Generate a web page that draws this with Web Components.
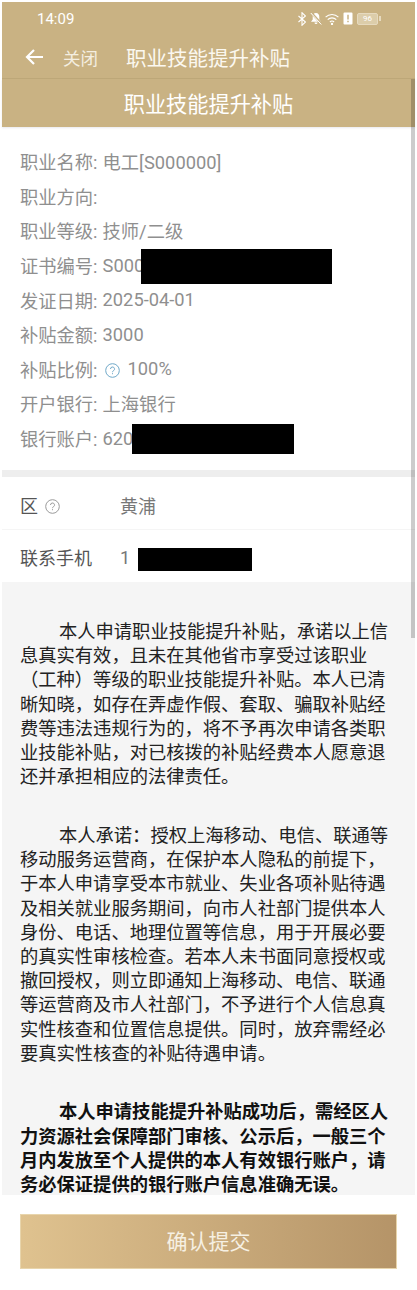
<!DOCTYPE html>
<html lang="zh">
<head>
<meta charset="utf-8">
<style>
  html, body { margin: 0; padding: 0; background: #fff; }
  body { width: 417px; height: 1290px; overflow: hidden; font-family: "Noto Sans CJK SC", "Liberation Sans", sans-serif; }
</style>
</head>
<body>
<app-page></app-page>
<script>
const CJK = '"Roboto", "Noto Sans CJK SC", sans-serif';

class StatusBar extends HTMLElement {
  constructor() {
    super();
    this.attachShadow({ mode: "open" }).innerHTML = `
      <style>
        :host { display: flex; align-items: center; justify-content: space-between; box-sizing: border-box; height: 34px; padding: 0 34px 1px 35px; color: #fff; font: 15px ${CJK}; }
        .icons { display: flex; align-items: center; }
        svg { display: block; }
        .batt { display: flex; align-items: center; gap: 1px; margin-left: 4px; }
        .level { box-sizing: border-box; width: 21px; height: 12px; border: 1px solid #e6dabf; border-radius: 2px; background: #dccdaa; font-size: 8px; line-height: 10px; text-align: center; color: #fff; }
        .tip { width: 2px; height: 5px; background: #e6dabf; }
      </style>
      <span>14:09</span>
      <div class="icons">
        <svg width="8" height="14" viewBox="0 0 8 14" fill="none" stroke="#fff" stroke-width="1.100"><path d="M.5 4l7 6-3.500 3.300V.7L7.500 4l-7 6"/></svg>
        <svg width="12" height="13" viewBox="0 0 12 13" fill="#fff" style="margin-left:4px"><path d="M6 1c2.300 0 3.300 1.800 3.300 3.800v2.800l1.700 2.200H1l1.700-2.200V4.800C2.700 2.800 3.700 1 6 1z"/><path d="M4.500 10.600h3a1.500 1.500 0 0 1-3 0z"/><path d="M1 .5l10.500 11.500" stroke="#c9b283" stroke-width="2.400"/><path d="M.8 1l10.500 11.500" stroke="#fff" stroke-width="1"/></svg>
        <svg width="14" height="12" viewBox="0 0 14 12" fill="none" stroke="#fff" stroke-width="1.100" style="margin-left:3px"><path d="M.6 4.200a9 9 0 0 1 12.800 0M2.700 6.700a6 6 0 0 1 8.600 0M4.900 9a3 3 0 0 1 4.200 0"/><circle cx="7" cy="11" r=".6" fill="#fff"/></svg>
        <svg width="10" height="13" viewBox="0 0 10 13" style="margin-left:4px"><path fill="#fff" d="M1.500 .5h7a1 1 0 0 1 1 1v10a1 1 0 0 1-1 1h-7a1 1 0 0 1-1-1v-10a1 1 0 0 1 1-1z"/><path d="M5 2.700v4.800M5 8.800v1.500" stroke="#c9b283" stroke-width="1.500"/></svg>
        <div class="batt"><div class="level">96</div><div class="tip"></div></div>
      </div>`;
  }
}

class NavBar extends HTMLElement {
  constructor() {
    super();
    this.attachShadow({ mode: "open" }).innerHTML = `
      <style>
        :host { display: flex; align-items: center; box-sizing: border-box; height: 43px; padding-left: 23px; color: #fff; font-family: "Noto Sans CJK SC", sans-serif; border-bottom: 1px solid #bfa878; }
        svg { display: block; margin-right: 20px; }
        .close { font-size: 17.500px; width: 63px; color: #f4eee0; }
        .title { font-size: 20.500px; color: #fbf8f0; }
      </style>
      <svg width="18" height="16" viewBox="0 0 18 16" fill="none" stroke="#fff" stroke-width="2.200"><path d="M18 8H2M9 1L2 8l7 7"/></svg>
      <span class="close">关闭</span>
      <span class="title"><slot></slot></span>`;
  }
}

class PageHeading extends HTMLElement {
  constructor() {
    super();
    this.attachShadow({ mode: "open" }).innerHTML = `
      <style>
        :host { display: block; box-sizing: border-box; height: 48px; padding-top: 2px; text-align: center; color: #fff; background: #c9b283; font: 21.200px/44px "Noto Sans CJK SC", sans-serif; box-shadow: 0 1px 2px rgba(120,130,160,.18); position: relative; }
      </style>
      <slot></slot>`;
  }
}

class InfoRow extends HTMLElement {
  constructor() {
    super();
    this.attachShadow({ mode: "open" }).innerHTML = `
      <style>
        :host { display: flex; align-items: center; height: 34.600px; color: #8f8f8f; font: 18.300px ${CJK}; white-space: nowrap; }
        .label { margin-right: 5px; }
      </style>
      <span class="label">${this.getAttribute("label")}:</span>
      <slot></slot>`;
  }
}

class FormRow extends HTMLElement {
  constructor() {
    super();
    this.attachShadow({ mode: "open" }).innerHTML = `
      <style>
        :host { display: flex; align-items: center; box-sizing: border-box; padding-left: 18px; font: 18px ${CJK}; color: #555; white-space: nowrap; }
        .label { width: 100px; display: flex; align-items: center; gap: 7px; }
        .value { display: flex; align-items: center; color: #777; }
      </style>
      <div class="label">${this.getAttribute("label")}<slot name="tip"></slot></div>
      <div class="value"><slot></slot></div>`;
  }
}

class HelpIcon extends HTMLElement {
  constructor() {
    super();
    const c = this.getAttribute("color") || "#9a9a9a";
    this.attachShadow({ mode: "open" }).innerHTML = `
      <style>
        :host { display: inline-flex; }
        svg { display: block; }
      </style>
      <svg width="15" height="15" viewBox="0 0 15 15" fill="none" stroke="${c}" stroke-width="1"><circle cx="7.500" cy="7.500" r="6.800"/><path d="M5.500 6a2 2 0 1 1 3 1.700c-.7.400-1 .8-1 1.500"/><path d="M7.500 10.200v1"/></svg>`;
  }
}

class ScrollThumb extends HTMLElement {
  constructor() {
    super();
    this.attachShadow({ mode: "open" }).innerHTML = `
      <style>
        :host { position: absolute; top: 79px; right: 2px; width: 4px; height: 559px; background: rgba(0,0,0,.2); }
      </style>`;
  }
}

class NoticeText extends HTMLElement {
  constructor() {
    super();
    this.attachShadow({ mode: "open" }).innerHTML = `
      <style>
        :host { display: block; height: 613px; overflow: hidden; background: #f5f5f5; padding: 36px 26px 0 18px; box-sizing: border-box; color: #222; font: 18.300px/24.200px "Noto Sans CJK SC", sans-serif; }
        ::slotted(p) { margin: 0 0 34.500px; text-indent: 39px; }
        ::slotted(p.strong) { font-weight: 700; color: #111; margin-bottom: 0; }
      </style>
      <slot></slot>`;
  }
}

class SubmitButton extends HTMLElement {
  constructor() {
    super();
    this.attachShadow({ mode: "open" }).innerHTML = `
      <style>
        :host { display: block; }
        button { display: block; box-sizing: border-box; width: 377px; height: 55px; padding: 0 0 4px; border: 1px solid #e8d5ac; background: linear-gradient(90deg, #dfc28f, #b59468); color: #f6f0e3; font: 21px "Noto Sans CJK SC", sans-serif; }
      </style>
      <button><slot></slot></button>`;
  }
}

class AppPage extends HTMLElement {
  constructor() {
    super();
    this.attachShadow({ mode: "open" }).innerHTML = `
      <style>
        :host { display: block; position: relative; width: 417px; height: 1290px; padding: 2px 2px 0 2px; box-sizing: border-box; background: #fff; }
        .top { background: #c9b283; }
        .info { padding: 17px 0 0 18px; height: 343px; box-sizing: border-box; }
        .mask { display: inline-block; flex: none; background: #000; }
        .band { height: 7px; background: #eeeeee; }
        .rows { display: flex; flex-direction: column; }
        .r1 { height: 53px; padding-top: 3px; border-bottom: 1px solid #f5f5f5; }
        .r2 { height: 52px; padding-top: 2px; }
        .foot { padding: 19px 0 0 18px; }
        .pct { margin-left: 8px; }
        .tipped { margin: 4px 0 0 2px; }
        .r1 help-icon { margin-top: 3px; }
      </style>
      <div class="top">
        <status-bar></status-bar>
        <nav-bar>职业技能提升补贴</nav-bar>
        <page-heading>职业技能提升补贴</page-heading>
      </div>
      <div class="info">
        <info-row label="职业名称">电工[S000000]</info-row>
        <info-row label="职业方向"></info-row>
        <info-row label="职业等级">技师/二级</info-row>
        <info-row label="证书编号">S000<span class="mask" style="width:191px;height:35px;margin:2px 0 0 -3px"></span></info-row>
        <info-row label="发证日期">2025-04-01</info-row>
        <info-row label="补贴金额">3000</info-row>
        <info-row label="补贴比例"><help-icon class="tipped" color="#6fa8c8"></help-icon><span class="pct">100%</span></info-row>
        <info-row label="开户银行">上海银行</info-row>
        <info-row label="银行账户">620<span class="mask" style="width:162px;height:30px;margin:2px 0 0 -1px"></span></info-row>
      </div>
      <div class="band"></div>
      <div class="rows">
        <form-row class="r1" label="区"><help-icon slot="tip"></help-icon>黄浦</form-row>
        <form-row class="r2" label="联系手机">1<span class="mask" style="width:114px;height:23px;margin:4px 0 0 8px"></span></form-row>
      </div>
      <notice-text>
        <p>本人申请职业技能提升补贴，承诺以上信息真实有效，且未在其他省市享受过该职业（工种）等级的职业技能提升补贴。本人已清晰知晓，如存在弄虚作假、套取、骗取补贴经费等违法违规行为的，将不予再次申请各类职业技能补贴，对已核拨的补贴经费本人愿意退还并承担相应的法律责任。</p>
        <p>本人承诺：授权上海移动、电信、联通等移动服务运营商，在保护本人隐私的前提下，于本人申请享受本市就业、失业各项补贴待遇及相关就业服务期间，向市人社部门提供本人身份、电话、地理位置等信息，用于开展必要的真实性审核检查。若本人未书面同意授权或撤回授权，则立即通知上海移动、电信、联通等运营商及市人社部门，不予进行个人信息真实性核查和位置信息提供。同时，放弃需经必要真实性核查的补贴待遇申请。</p>
        <p class="strong">本人申请技能提升补贴成功后，需经区人力资源社会保障部门审核、公示后，一般三个月内发放至个人提供的本人有效银行账户，请务必保证提供的银行账户信息准确无误。</p>
      </notice-text>
      <div class="foot"><submit-button>确认提交</submit-button></div>
      <scroll-thumb></scroll-thumb>`;
  }
}

customElements.define("status-bar", StatusBar);
customElements.define("nav-bar", NavBar);
customElements.define("page-heading", PageHeading);
customElements.define("info-row", InfoRow);
customElements.define("form-row", FormRow);
customElements.define("help-icon", HelpIcon);
customElements.define("scroll-thumb", ScrollThumb);
customElements.define("notice-text", NoticeText);
customElements.define("submit-button", SubmitButton);
customElements.define("app-page", AppPage);
</script>
</body>
</html>
